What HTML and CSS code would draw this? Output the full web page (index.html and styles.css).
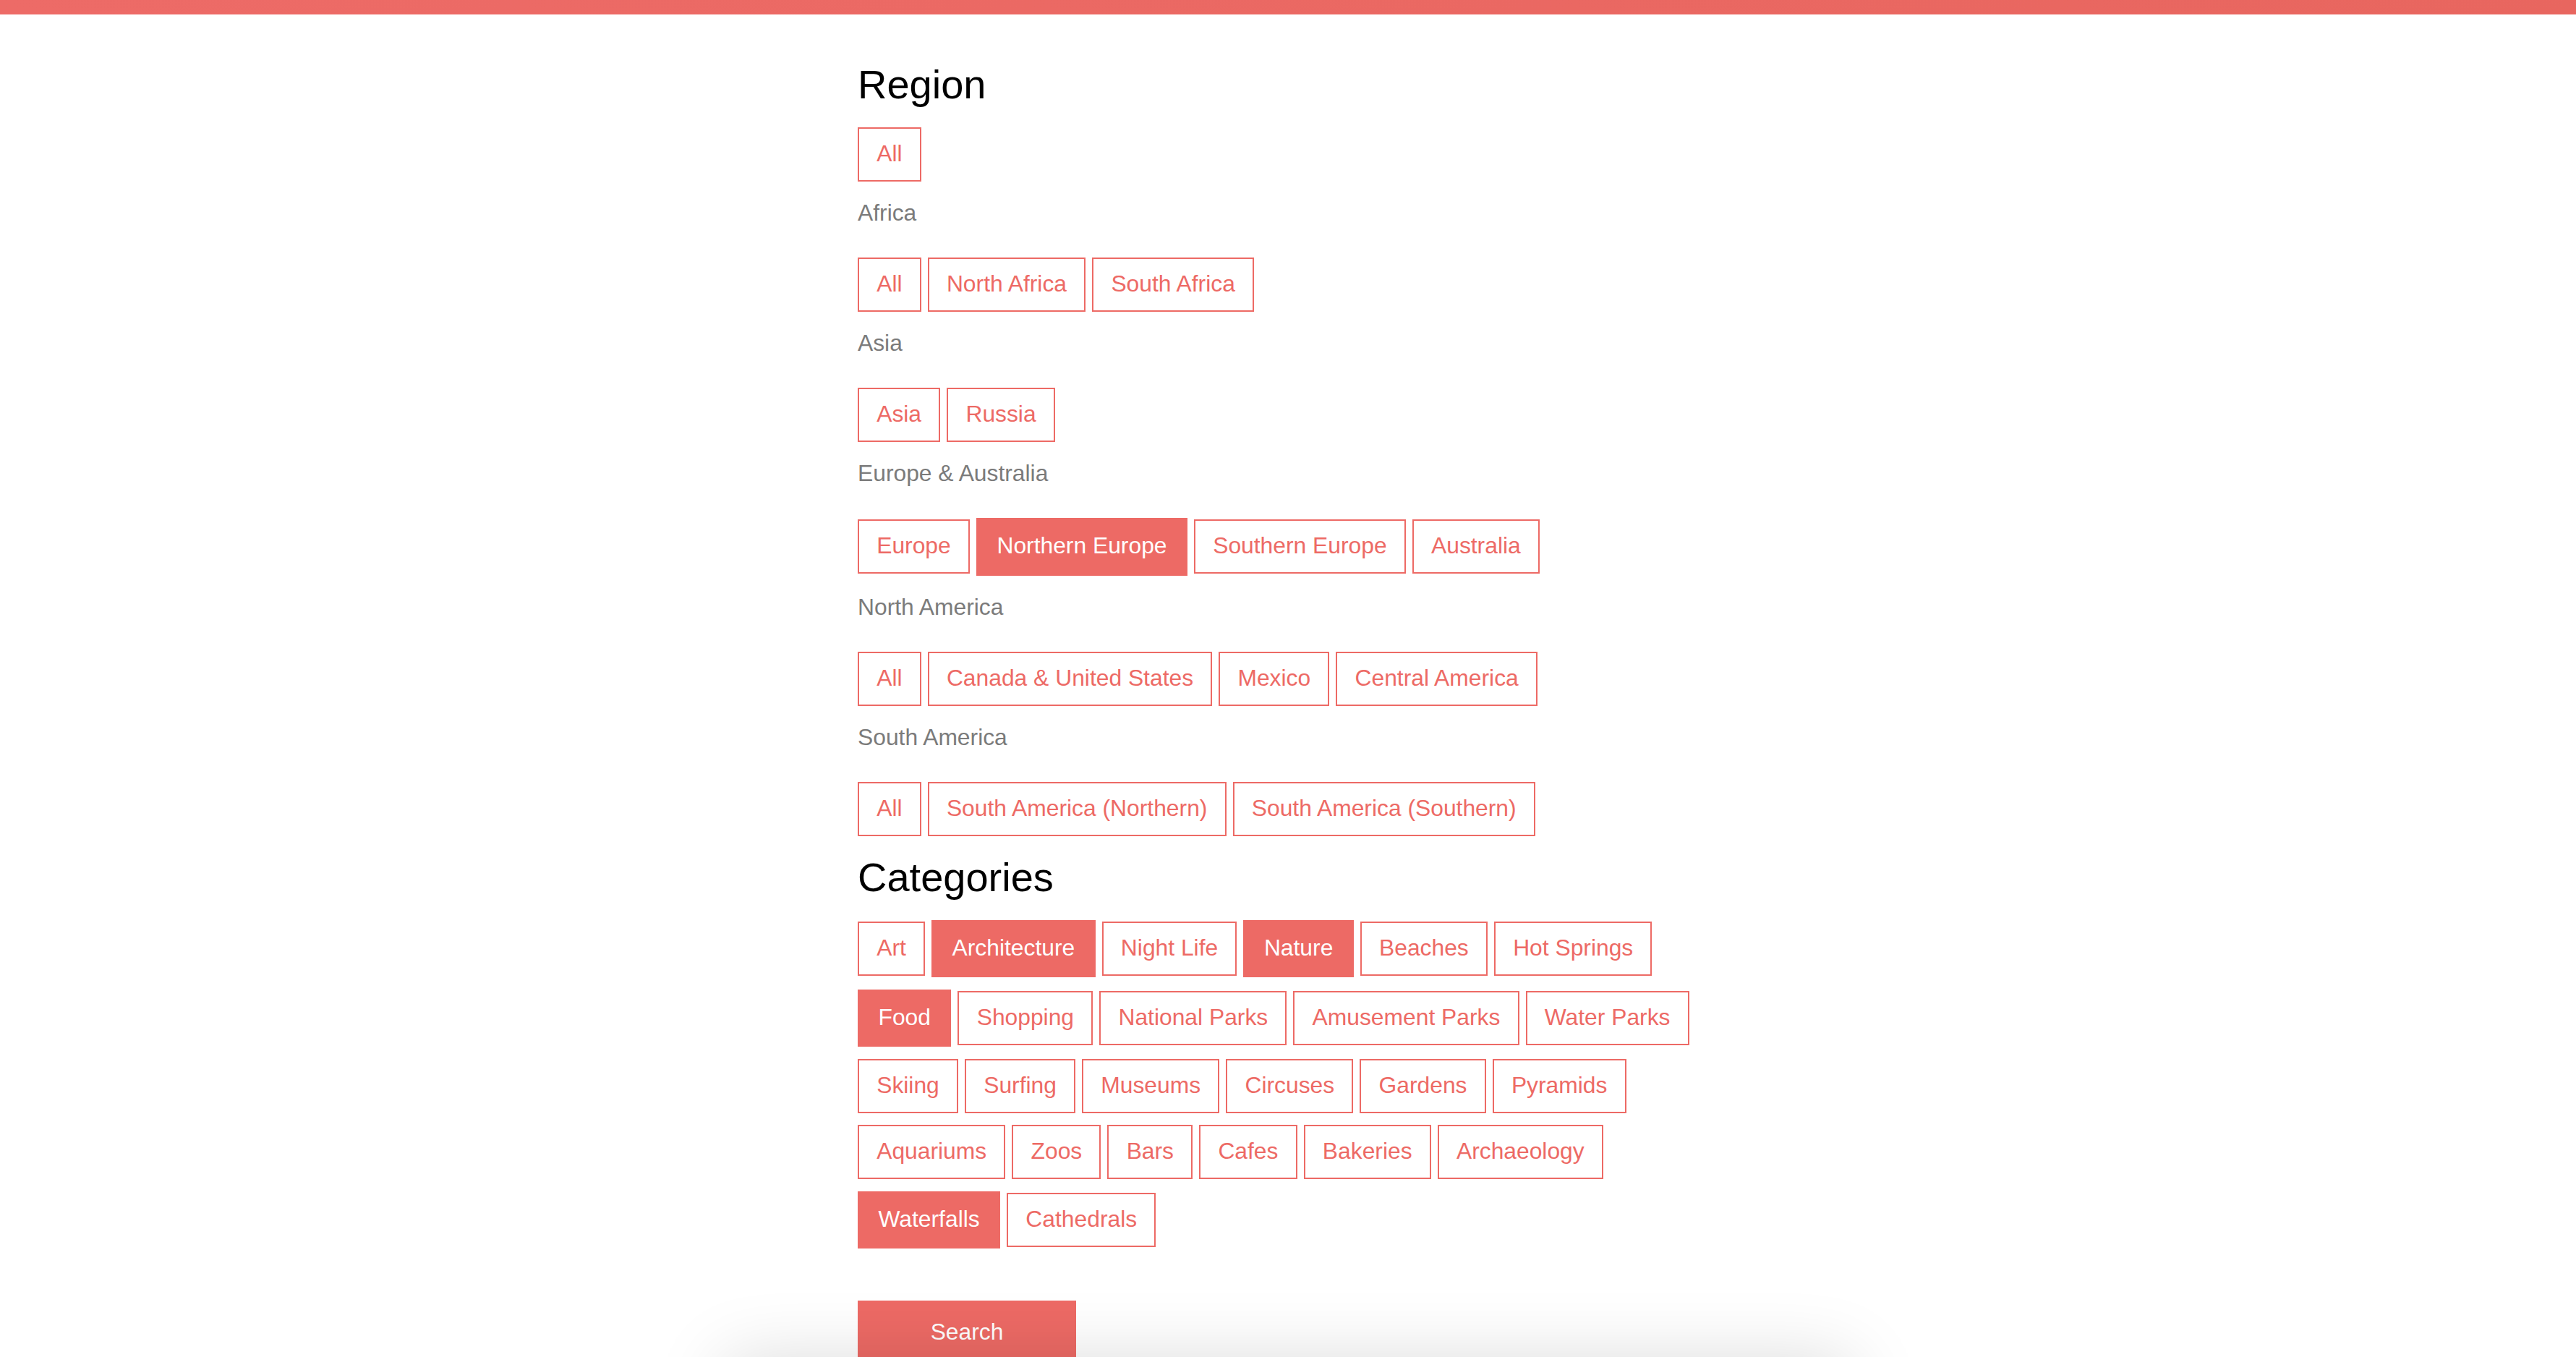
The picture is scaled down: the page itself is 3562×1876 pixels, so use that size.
FILE: index.html
```html
<!DOCTYPE html>
<html lang="en">
<head>
<meta charset="utf-8">
<title>Filters</title>
<link rel="stylesheet" href="styles.css">
</head>
<body>
<div class="topbar"></div>
<main class="panel">
  <h2 class="heading">Region</h2>
  <div class="chips">
    <button class="chip">All</button>
  </div>

  <p class="group-label">Africa</p>
  <div class="chips">
    <button class="chip">All</button>
    <button class="chip">North Africa</button>
    <button class="chip">South Africa</button>
  </div>

  <p class="group-label">Asia</p>
  <div class="chips">
    <button class="chip">Asia</button>
    <button class="chip">Russia</button>
  </div>

  <p class="group-label">Europe &amp; Australia</p>
  <div class="chips">
    <button class="chip">Europe</button>
    <button class="chip active">Northern Europe</button>
    <button class="chip">Southern Europe</button>
    <button class="chip">Australia</button>
  </div>

  <p class="group-label">North America</p>
  <div class="chips">
    <button class="chip">All</button>
    <button class="chip">Canada &amp; United States</button>
    <button class="chip">Mexico</button>
    <button class="chip">Central America</button>
  </div>

  <p class="group-label">South America</p>
  <div class="chips">
    <button class="chip">All</button>
    <button class="chip">South America (Northern)</button>
    <button class="chip">South America (Southern)</button>
  </div>

  <h2 class="heading heading-cat">Categories</h2>
  <div class="chips">
    <button class="chip">Art</button>
    <button class="chip active">Architecture</button>
    <button class="chip">Night Life</button>
    <button class="chip active">Nature</button>
    <button class="chip">Beaches</button>
    <button class="chip">Hot Springs</button>
    <button class="chip active">Food</button>
    <button class="chip">Shopping</button>
    <button class="chip">National Parks</button>
    <button class="chip">Amusement Parks</button>
    <button class="chip">Water Parks</button>
    <button class="chip">Skiing</button>
    <button class="chip">Surfing</button>
    <button class="chip">Museums</button>
    <button class="chip">Circuses</button>
    <button class="chip">Gardens</button>
    <button class="chip">Pyramids</button>
    <button class="chip">Aquariums</button>
    <button class="chip">Zoos</button>
    <button class="chip">Bars</button>
    <button class="chip">Cafes</button>
    <button class="chip">Bakeries</button>
    <button class="chip">Archaeology</button>
    <button class="chip active">Waterfalls</button>
    <button class="chip">Cathedrals</button>
  </div>

  <button class="search">Search</button>
</main>
<div class="shade"></div>
</body>
</html>
```

FILE: styles.css
```css
html, body {
  margin: 0;
  height: 100%;
  overflow: hidden;
  background: #fff;
  font-family: "Liberation Sans", Arial, Helvetica, sans-serif;
}

.topbar {
  height: 20px;
  background: linear-gradient(90deg, #ed6b67, #e8665f);
}

.panel {
  width: 1190px;
  margin: 0 auto;
}

.heading {
  font-size: 56px;
  line-height: 64px;
  font-weight: 400;
  color: #000;
  margin: 65.3px 0 26.7px;
}

.heading-cat {
  margin-top: 25px;
  margin-bottom: 27px;
}

.group-label {
  font-size: 31.8px;
  line-height: 36px;
  color: #7b7b7b;
  margin: 25.5px 0 43.5px;
}

.chips {
  display: flex;
  flex-wrap: wrap;
  align-items: center;
  column-gap: 9px;
  row-gap: 16.5px;
}

.chip {
  font-family: inherit;
  font-size: 31.8px;
  line-height: 36px;
  color: #ed6a65;
  background: #fff;
  border: 2px solid #ed6a65;
  border-radius: 0;
  margin: 0;
  padding: 16px 24.2px 19px;
  cursor: pointer;
}

.chip.active {
  background: #ed6a65;
  color: #fff;
  padding: 18.3px 26.5px 21.3px;
}

.search {
  display: block;
  margin-top: 72px;
  width: 302px;
  padding: 24.3px 0 24px;
  border: 0;
  border-radius: 0;
  background: #ed6a65;
  color: #fff;
  font-family: inherit;
  font-size: 31.8px;
  line-height: 36px;
  cursor: pointer;
}

.shade {
  position: fixed;
  left: 50%;
  transform: translateX(-50%);
  top: calc(100% + 5px);
  width: 1556px;
  height: 200px;
  background: #fff;
  box-shadow: 0 0 100px rgba(0, 0, 0, 0.15);
  pointer-events: none;
}
```
